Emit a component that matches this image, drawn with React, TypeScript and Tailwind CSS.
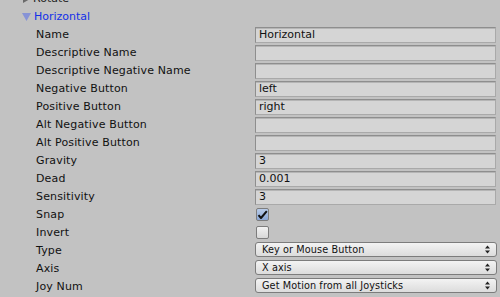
import React from "react";

type Row =
  | { label: string; kind: "text"; value: string }
  | { label: string; kind: "check"; value: boolean }
  | { label: string; kind: "select"; value: string };

const rows: Row[] = [
  { label: "Name", kind: "text", value: "Horizontal" },
  { label: "Descriptive Name", kind: "text", value: "" },
  { label: "Descriptive Negative Name", kind: "text", value: "" },
  { label: "Negative Button", kind: "text", value: "left" },
  { label: "Positive Button", kind: "text", value: "right" },
  { label: "Alt Negative Button", kind: "text", value: "" },
  { label: "Alt Positive Button", kind: "text", value: "" },
  { label: "Gravity", kind: "text", value: "3" },
  { label: "Dead", kind: "text", value: "0.001" },
  { label: "Sensitivity", kind: "text", value: "3" },
  { label: "Snap", kind: "check", value: true },
  { label: "Invert", kind: "check", value: false },
  { label: "Type", kind: "select", value: "Key or Mouse Button" },
  { label: "Axis", kind: "select", value: "X axis" },
  { label: "Joy Num", kind: "select", value: "Get Motion from all Joysticks" },
];

function Field({ row }: { row: Row }) {
  if (row.kind === "text") {
    return (
      <div className="mt-[1px] h-[16px] w-[241px] border border-[#8e8e8e] border-b-[#a9a9a9] border-r-[#a9a9a9] bg-[#d5d5d5] pl-[3px] leading-[14px] shadow-[inset_0_1px_0_#b5b5b5]">
        {row.value}
      </div>
    );
  }
  if (row.kind === "check") {
    return (
      <div
        className={
          "ml-[1px] mt-[2px] flex h-[13px] w-[13px] items-center justify-center rounded-[2px] border border-[#7d7d7d] " +
          (row.value
            ? "bg-gradient-to-b from-[#b8cbe8] to-[#8aa6d4]"
            : "bg-gradient-to-b from-[#f2f2f2] to-[#d8d8d8]")
        }
      >
        {row.value && (
          <svg width="11" height="10" viewBox="0 0 11 10">
            <path d="M1.5 5.2 L4 8 L9.8 1.2" fill="none" stroke="#111" strokeWidth="2" strokeLinejoin="round" />
          </svg>
        )}
      </div>
    );
  }
  return (
    <div className="flex h-[15px] w-[242px] items-center justify-between rounded-[3px] border border-[#7c7c7c] bg-gradient-to-b from-[#f3f3f3] to-[#dcdcdc] pl-[6px] pr-[6px] text-[9.7px] leading-[13px] tracking-[0.1px]">
      <span>{row.value}</span>
      <svg width="5" height="9" viewBox="0 0 5 9">
        <path d="M0 3.5 L2.5 0.5 L5 3.5 Z M0 5.5 L2.5 8.5 L5 5.5 Z" fill="#222" />
      </svg>
    </div>
  );
}

export default function App() {
  return (
    <div
      className="h-[297px] w-[500px] overflow-hidden bg-[#c2c2c2] text-[11px] text-[#111]"
      style={{ fontFamily: '"DejaVu Sans", Verdana, sans-serif' }}
    >
      <div className="-mt-[10px] flex flex-col">
        <div className="flex h-[18px] items-center pl-[23px] gap-[3px] text-[#222]">
          <svg width="7" height="8" viewBox="0 0 7 8">
            <path d="M0 0 L7 4 L0 8 Z" fill="#6a6a6a" />
          </svg>
          <span>Rotate</span>
        </div>
        <div className="flex h-[18px] items-center pl-[22px] gap-[3px] text-[#1330e8]">
          <svg width="9" height="8" viewBox="0 0 9 8">
            <path d="M0 0 L9 0 L4.5 8 Z" fill="#8793d6" />
          </svg>
          <span>Horizontal</span>
        </div>
        {rows.map((r) => (
          <div key={r.label} className="flex h-[18px] items-start">
            <div className="w-[255px] pl-[36px] leading-[17px] tracking-[0.15px]">{r.label}</div>
            <Field row={r} />
          </div>
        ))}
      </div>
    </div>
  );
}
